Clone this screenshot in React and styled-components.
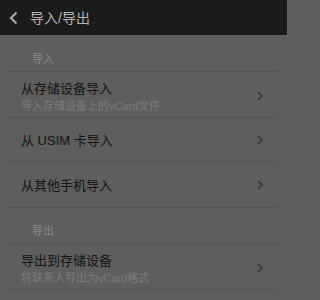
import styled, { createGlobalStyle } from 'styled-components';

const GlobalStyle = createGlobalStyle`
  html, body {
    margin: 0;
    padding: 0;
    background: #5e5e5e;
  }
  body {
    font-family: "Liberation Sans", "Noto Sans CJK SC", sans-serif;
  }
`;

const Screen = styled.div`
  width: 287px;
  height: 300px;
  overflow: hidden;
  background: #5e5e5e;
`;

const TopBar = styled.div`
  height: 35px;
  background: #1b1b1b;
  display: flex;
  align-items: center;
  padding-left: 8px;
  gap: 10px;
`;

const BackIcon = styled.svg`
  width: 12px;
  height: 14px;
  display: block;
`;

const Title = styled.div`
  font-size: 14px;
  color: #b4b4b4;
  line-height: 1;
  margin-top: 1px;
`;

const SectionLabel = styled.div`
  height: ${(p) => p.$h}px;
  box-sizing: border-box;
  margin: 0 10px 0 8px;
  padding: 0 0 6px 24px;
  display: flex;
  align-items: flex-end;
  font-size: 11px;
  line-height: 12px;
  color: #898989;
  border-bottom: 1px solid #515151;
`;

const Row = styled.div`
  height: ${(p) => p.$h}px;
  box-sizing: border-box;
  margin: 0 10px 0 8px;
  padding: ${(p) => (p.$sub ? 5 : 3)}px 14px 0 13px;
  display: flex;
  align-items: center;
  border-bottom: 1px solid #535353;
`;

const RowText = styled.div`
  flex: 1;
  display: flex;
  flex-direction: column;
  gap: 3px;
`;

const RowTitle = styled.div`
  font-size: 13px;
  line-height: 16px;
  color: #141414;
`;

const RowSub = styled.div`
  font-size: 11px;
  line-height: 13px;
  color: #7b7b7b;
`;

const Chevron = styled.svg`
  width: 6px;
  height: 10px;
  display: block;
  margin-top: ${(p) => (p.$sub ? -2 : -2)}px;
`;

const Arrow = ({ sub }) => (
  <Chevron $sub={sub} viewBox="0 0 6 10">
    <path d="M1 1 L5 5 L1 9" fill="none" stroke="#3a3a3a" strokeWidth="1.7" />
  </Chevron>
);

const items = [
  { type: 'label', text: '导入', h: 37 },
  { type: 'row', title: '从存储设备导入', sub: '导入存储设备上的vCard文件', h: 46 },
  { type: 'row', title: '从 USIM 卡导入', h: 44 },
  { type: 'row', title: '从其他手机导入', h: 46 },
  { type: 'label', text: '导出', h: 36 },
  { type: 'row', title: '导出到存储设备', sub: '将联系人导出为vCard格式', h: 46 },
];

export default function App() {
  return (
    <Screen>
      <GlobalStyle />
      <TopBar>
        <BackIcon viewBox="0 0 12 14">
          <path d="M8.5 1.5 L3 7 L8.5 12.5" fill="none" stroke="#a8a8a8" strokeWidth="2.2" />
        </BackIcon>
        <Title>导入/导出</Title>
      </TopBar>
      {items.map((it, i) =>
        it.type === 'label' ? (
          <SectionLabel key={i} $h={it.h}>{it.text}</SectionLabel>
        ) : (
          <Row key={i} $h={it.h} $sub={!!it.sub}>
            <RowText>
              <RowTitle>{it.title}</RowTitle>
              {it.sub && <RowSub>{it.sub}</RowSub>}
            </RowText>
            <Arrow sub={!!it.sub} />
          </Row>
        )
      )}
    </Screen>
  );
}
